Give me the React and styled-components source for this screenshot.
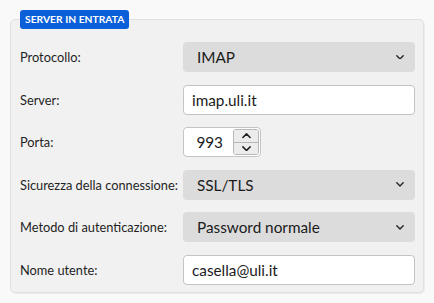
import React from "react";
import styled, { createGlobalStyle } from "styled-components";

const Global = createGlobalStyle`
  html, body { margin: 0; padding: 0; background: #f9f9f9; }
  body { font-family: Lato, "Noto Sans", sans-serif; color: #1b1b1b; }
`;

const Page = styled.div`
  padding: 19px 10px 10px 10px;
`;

const Panel = styled.div`
  position: relative;
  background: #f1f1f1;
  border: 1px solid #e0e0e0;
  border-radius: 5px;
  box-shadow: 1px 1px 0 #ececec;
  padding: 22px 8px 7px 9px;
  display: grid;
  grid-template-columns: 163px 1fr;
  row-gap: 12.6px;
  align-items: center;
`;

const Badge = styled.div`
  position: absolute;
  top: -10px;
  left: 9px;
  background: #0b5fd8;
  color: #fff;
  font-size: 10.3px;
  font-weight: 700;
  line-height: 19px;
  height: 19px;
  padding: 0 5px;
  border-radius: 3px;
`;

const Label = styled.label`
  font-size: 12.8px;
  color: #1f1f1f;
  white-space: nowrap;
`;

const Select = styled.div`
  height: 30px;
  box-sizing: border-box;
  background: #dcdcdc;
  border-radius: 4px;
  display: flex;
  align-items: center;
  justify-content: space-between;
  padding: 0 11px 0 14px;
  font-size: 15.3px;
`;

const Input = styled.div`
  height: 30px;
  box-sizing: border-box;
  background: #fff;
  border: 1px solid #c4c4c4;
  border-radius: 4px;
  display: flex;
  align-items: center;
  padding: 0 8px;
  font-size: 15.3px;
`;

const Spinner = styled.div`
  height: 30px;
  width: 78px;
  box-sizing: border-box;
  background: #fff;
  border: 1px solid #c4c4c4;
  border-radius: 4px;
  display: flex;
  align-items: center;
  justify-content: space-between;
  padding: 0 1px 0 0;
  font-size: 15.3px;
`;

const SpinValue = styled.span`
  flex: 1;
  text-align: right;
  padding-right: 10px;
`;

const SpinButtons = styled.div`
  display: flex;
  flex-direction: column;
  width: 26px;
  height: 26px;
  border: 1px solid #b8b8b8;
  border-radius: 3px;
  overflow: hidden;
  box-sizing: border-box;
`;

const SpinBtn = styled.div`
  flex: 1;
  display: flex;
  align-items: center;
  justify-content: center;
  background: #ececec;
  & + & { border-top: 1px solid #b8b8b8; }
`;

const Chevron = ({ up, size = 8 }) => (
  <svg width={size} height={size * 0.6} viewBox="0 0 10 6" fill="none">
    <path
      d={up ? "M1 5 L5 1 L9 5" : "M1 1 L5 5 L9 1"}
      stroke="#222"
      strokeWidth="1.7"
      strokeLinecap="round"
      strokeLinejoin="round"
    />
  </svg>
);

export default function App() {
  return (
    <>
      <Global />
      <Page>
        <Panel>
          <Badge>SERVER IN ENTRATA</Badge>
          <Label>Protocollo:</Label>
          <Select>
            <span>IMAP</span>
            <Chevron />
          </Select>
          <Label>Server:</Label>
          <Input>imap.uli.it</Input>
          <Label>Porta:</Label>
          <Spinner>
            <SpinValue>993</SpinValue>
            <SpinButtons>
              <SpinBtn><Chevron up size={9} /></SpinBtn>
              <SpinBtn><Chevron size={9} /></SpinBtn>
            </SpinButtons>
          </Spinner>
          <Label>Sicurezza della connessione:</Label>
          <Select>
            <span>SSL/TLS</span>
            <Chevron />
          </Select>
          <Label>Metodo di autenticazione:</Label>
          <Select>
            <span>Password normale</span>
            <Chevron />
          </Select>
          <Label>Nome utente:</Label>
          <Input>casella@uli.it</Input>
        </Panel>
      </Page>
    </>
  );
}
